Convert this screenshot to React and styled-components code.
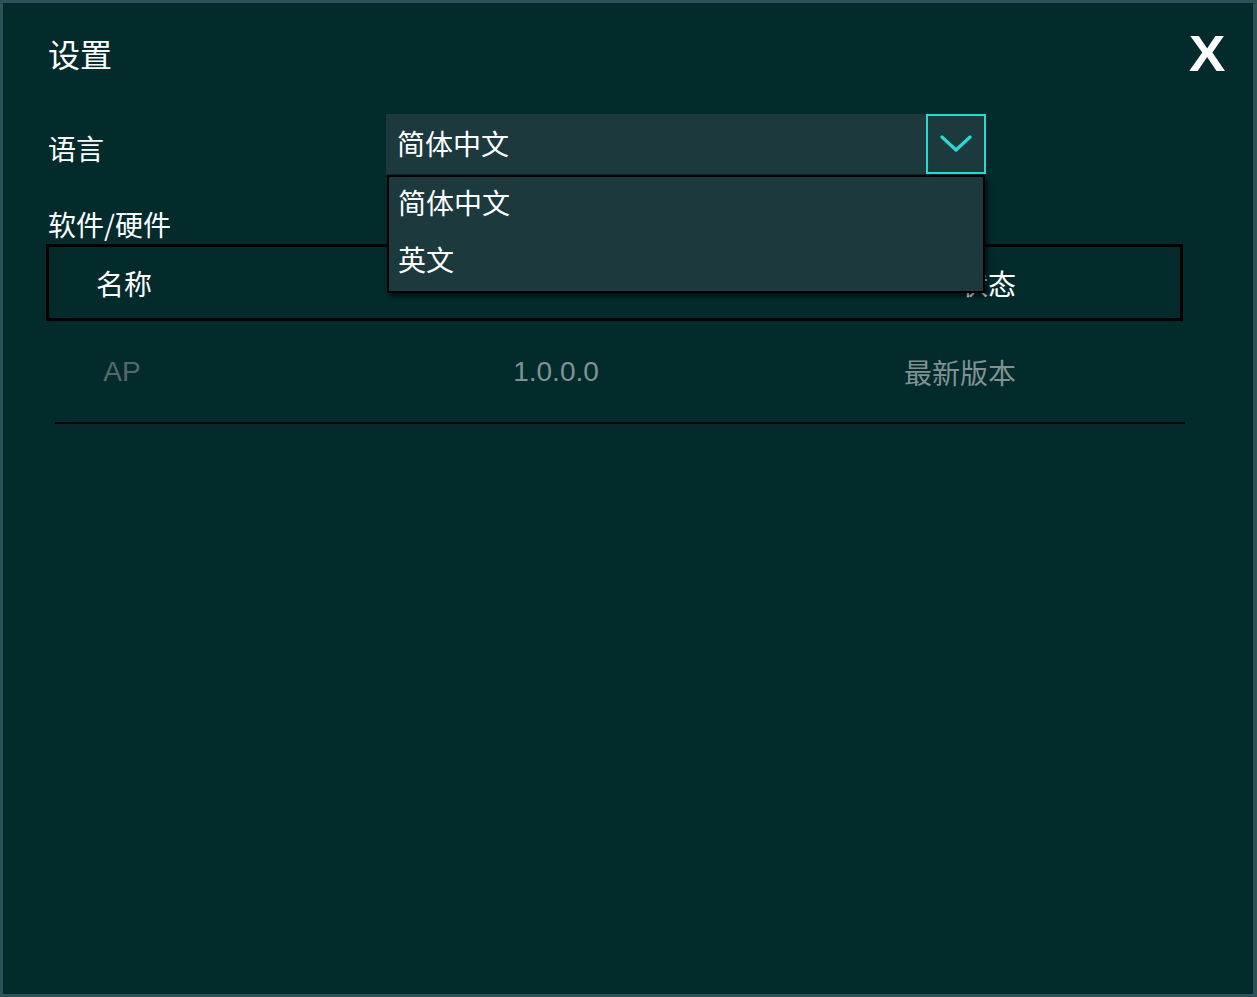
import React from 'react';
import styled, { createGlobalStyle } from 'styled-components';

const GlobalStyle = createGlobalStyle`
  html, body {
    margin: 0;
    padding: 0;
    background: #032b2c;
  }
  body {
    font-family: "Noto Sans CJK SC", "Liberation Sans", sans-serif;
  }
`;

/* the whole settings window */
const Panel = styled.div`
  box-sizing: border-box;
  width: 1257px;
  height: 997px;
  background: #032b2c;
  border-style: solid;
  border-color: #2d5358;
  border-width: 3px 4px 3px 3px;
  padding: 31px 28px 0 43px;
  color: #ffffff;
`;

const TitleBar = styled.div`
  display: flex;
  align-items: center;
  justify-content: space-between;
  height: 40px;
`;

const Title = styled.div`
  font-size: 32px;
  line-height: 40px;
  padding-left: 2px;
  margin-top: -2px;
`;

const CloseButton = styled.div`
  font-family: "Liberation Sans", Arial, sans-serif;
  font-weight: 700;
  font-size: 50px;
  line-height: 40px;
  transform: scaleX(1.1);
  transform-origin: right center;
  cursor: pointer;
`;

const Content = styled.div`
  margin-right: 42px;
`;

const LangRow = styled.div`
  display: flex;
  align-items: center;
  height: 60px;
  margin-top: 40px;
`;

const Label = styled.div`
  width: ${(p) => p.width || 'auto'};
  font-size: 28px;
  line-height: 30px;
  padding-top: ${(p) => p.offset || 0}px;
  padding-left: 2px;
  margin-top: ${(p) => p.top || 0}px;
`;

const SelectWrap = styled.div`
  position: relative;
  width: 600px;
  height: 60px;
`;

const SelectBox = styled.div`
  display: flex;
  align-items: center;
  height: 60px;
  background: #1c3a3e;
`;

const SelectValue = styled.div`
  flex: 1;
  font-size: 28px;
  line-height: 30px;
  padding-left: 11px;
  margin-top: -3px;
`;

const ArrowButton = styled.div`
  box-sizing: border-box;
  display: flex;
  align-items: center;
  justify-content: center;
  width: 60px;
  height: 60px;
  border: 2px solid #2bd9d2;
`;

/* popup list of languages, lies over the table */
const Menu = styled.div`
  position: absolute;
  top: 61px;
  left: 1px;
  z-index: 5;
  box-sizing: border-box;
  width: 598px;
  display: flex;
  flex-direction: column;
  gap: 7px;
  padding-bottom: 7px;
  background: #1c3a3e;
  border: 2px solid #000;
  box-shadow: 3px 4px 4px rgba(0, 0, 0, 0.55);
`;

const MenuItem = styled.div`
  display: flex;
  align-items: center;
  height: 50px;
  padding-left: 9px;
  font-size: 28px;
  line-height: 30px;
`;

const TableHead = styled.div`
  display: grid;
  grid-template-columns: 150px 1fr 280px;
  align-items: center;
  box-sizing: border-box;
  height: 77px;
  margin-top: 5px;
  border: 3px solid #000;
`;

const TableRow = styled.div`
  display: grid;
  grid-template-columns: 134px 1fr 290px;
  align-items: center;
  height: 101px;
  margin: 0 -2px 0 9px;
  border-bottom: 2px solid #000;
`;

const Cell = styled.div`
  text-align: ${(p) => p.align || 'center'};
  padding-right: ${(p) => p.pr || 0}px;
  padding-left: ${(p) => p.pl || 0}px;
  font-family: ${(p) => (p.latin ? '"Liberation Sans", Arial, sans-serif' : '"Noto Sans CJK SC", sans-serif')};
  font-size: 28px;
  line-height: 30px;
  color: ${(p) => p.color || '#ffffff'};
  white-space: nowrap;
`;

const Chevron = () => (
  <svg width="32" height="18" viewBox="0 0 32 18">
    <path d="M2 2 L16 15 L30 2" fill="none" stroke="#2bd9d2" strokeWidth="3.2" strokeLinecap="round" strokeLinejoin="round" />
  </svg>
);

const languages = ['简体中文', '英文'];

export default function App() {
  return (
    <>
      <GlobalStyle />
      <Panel>
        <TitleBar>
          <Title>设置</Title>
          <CloseButton>X</CloseButton>
        </TitleBar>
        <Content>
          <LangRow>
            <Label width="338px" offset={7}>语言</Label>
            <SelectWrap>
              <SelectBox>
                <SelectValue>简体中文</SelectValue>
                <ArrowButton><Chevron /></ArrowButton>
              </SelectBox>
              <Menu>
                {languages.map((lang) => (
                  <MenuItem key={lang}>{lang}</MenuItem>
                ))}
              </Menu>
            </SelectWrap>
          </LangRow>
          <Label top={35}>软件/硬件</Label>
          <TableHead>
            <Cell>名称</Cell>
            <Cell />
            <Cell align="right" pr={164}>状态</Cell>
          </TableHead>
          <TableRow>
            <Cell latin color="#56696a">AP</Cell>
            <Cell latin color="#819192" pl={28}>1.0.0.0</Cell>
            <Cell align="right" pr={169} color="#819192">最新版本</Cell>
          </TableRow>
        </Content>
      </Panel>
    </>
  );
}
